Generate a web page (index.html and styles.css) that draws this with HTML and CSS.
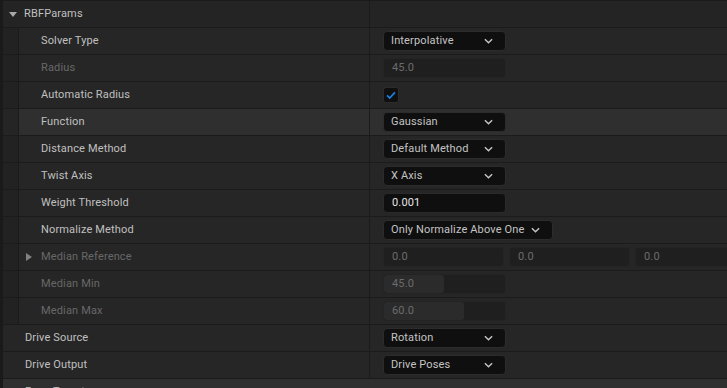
FILE: index.html
```html
<!DOCTYPE html>
<html>
<head>
<meta charset="utf-8">
<link rel="stylesheet" href="styles.css">
</head>
<body>
<div class="panel">
  <div class="row header">
    <div class="name"><span class="tri-down"></span><span class="label">RBFParams</span></div>
    <div class="value"></div>
  </div>
  <div class="row">
    <div class="name nested"><span class="indent"></span><span class="label">Solver Type</span></div>
    <div class="value"><div class="combo"><span>Interpolative</span><svg class="chev" viewBox="0 0 10 6"><polyline points="1,1 5,5 9,1"/></svg></div></div>
  </div>
  <div class="row">
    <div class="name nested"><span class="indent"></span><span class="label dim">Radius</span></div>
    <div class="value"><div class="field disabled">45.0</div></div>
  </div>
  <div class="row">
    <div class="name nested"><span class="indent"></span><span class="label">Automatic Radius</span></div>
    <div class="value"><div class="check"><svg viewBox="0 0 16 16"><polyline points="3.5,8.5 6.5,11.5 12.5,5"/></svg></div></div>
  </div>
  <div class="row hover">
    <div class="name nested"><span class="indent"></span><span class="label">Function</span></div>
    <div class="value"><div class="combo"><span>Gaussian</span><svg class="chev" viewBox="0 0 10 6"><polyline points="1,1 5,5 9,1"/></svg></div></div>
  </div>
  <div class="row">
    <div class="name nested"><span class="indent"></span><span class="label">Distance Method</span></div>
    <div class="value"><div class="combo"><span>Default Method</span><svg class="chev" viewBox="0 0 10 6"><polyline points="1,1 5,5 9,1"/></svg></div></div>
  </div>
  <div class="row">
    <div class="name nested"><span class="indent"></span><span class="label">Twist Axis</span></div>
    <div class="value"><div class="combo"><span>X Axis</span><svg class="chev" viewBox="0 0 10 6"><polyline points="1,1 5,5 9,1"/></svg></div></div>
  </div>
  <div class="row">
    <div class="name nested"><span class="indent"></span><span class="label">Weight Threshold</span></div>
    <div class="value"><div class="field active">0.001</div></div>
  </div>
  <div class="row">
    <div class="name nested"><span class="indent"></span><span class="label">Normalize Method</span></div>
    <div class="value"><div class="combo"><span>Only Normalize Above One</span><svg class="chev" viewBox="0 0 10 6"><polyline points="1,1 5,5 9,1"/></svg></div></div>
  </div>
  <div class="row">
    <div class="name nested"><span class="indent"></span><span class="tri-right"></span><span class="label dim">Median Reference</span></div>
    <div class="value"><div class="field disabled vec">0.0</div><div class="field disabled vec">0.0</div><div class="field disabled vec">0.0</div></div>
  </div>
  <div class="row">
    <div class="name nested"><span class="indent"></span><span class="label dim">Median Min</span></div>
    <div class="value"><div class="field disabled slider"><span class="fill" style="width:60px"></span><span class="num">45.0</span></div></div>
  </div>
  <div class="row">
    <div class="name nested"><span class="indent"></span><span class="label dim">Median Max</span></div>
    <div class="value"><div class="field disabled slider"><span class="fill" style="width:80px"></span><span class="num">60.0</span></div></div>
  </div>
  <div class="row">
    <div class="name"><span class="label">Drive Source</span></div>
    <div class="value"><div class="combo"><span>Rotation</span><svg class="chev" viewBox="0 0 10 6"><polyline points="1,1 5,5 9,1"/></svg></div></div>
  </div>
  <div class="row">
    <div class="name"><span class="label">Drive Output</span></div>
    <div class="value"><div class="combo"><span>Drive Poses</span><svg class="chev" viewBox="0 0 10 6"><polyline points="1,1 5,5 9,1"/></svg></div></div>
  </div>
  <div class="row category">
    <div class="name"><span class="label">Pose Targets</span></div>
  </div>
</div>
</body>
</html>
```

FILE: styles.css
```css
html, body {
  margin: 0;
  padding: 0;
  background: #1a1a1a;
  overflow: hidden;
}
body {
  font-family: Roboto, "Liberation Sans", sans-serif;
  font-size: 11px;
  letter-spacing: 0.15px;
  color: #c0c0c0;
}
.panel {
  margin-left: 3px;
  display: flex;
  flex-direction: column;
}
.row {
  display: flex;
  height: 26px;
  flex: none;
  border-top: 1px solid #1b1b1b;
  background: #262626;
}
.row.header {
  background: #242424;
}
.row.hover {
  background: #2f2f2f;
}
.row.category {
  background: #2f2f2f;
}
.name {
  width: 367px;
  box-sizing: border-box;
  border-right: 1px solid #1b1b1b;
  display: flex;
  align-items: center;
  padding-left: 22px;
  padding-bottom: 2px;
  flex: none;
}
.row.category .name {
  border-right: none;
  flex: 1;
  padding-bottom: 0;
  align-items: flex-start;
  padding-top: 6px;
}
.name.nested {
  padding-left: 0;
}
.indent {
  width: 15px;
  align-self: stretch;
  background: #222222;
  border-right: 1px solid #1b1b1b;
  margin-right: 22px;
  margin-bottom: -2px;
  flex: none;
}
.row.hover .indent {
  background: #252525;
}
.label {
  white-space: nowrap;
}
.label.dim {
  color: #686868;
}
.tri-down {
  position: relative;
  left: -16px;
  top: 1px;
  width: 0;
  height: 0;
  margin-right: -9px;
  border-left: 4.5px solid transparent;
  border-right: 4.5px solid transparent;
  border-top: 5px solid #a8a8a8;
}
.tri-right {
  width: 0;
  height: 0;
  margin-left: -15px;
  margin-right: 9px;
  margin-top: 1px;
  border-top: 4.5px solid transparent;
  border-bottom: 4.5px solid transparent;
  border-left: 6px solid #808080;
}
.value {
  flex: 1;
  display: flex;
  align-items: center;
  padding-left: 13px;
  gap: 5px;
  overflow: hidden;
  min-width: 0;
}
.combo {
  min-width: 123px;
  height: 20px;
  box-sizing: border-box;
  background: #0f0f0f;
  border: 1px solid #2c2c2c;
  border-radius: 4px;
  display: flex;
  align-items: center;
  padding: 0 12px 1px 7px;
  gap: 7px;
  white-space: nowrap;
  color: #c4c4c4;
  flex: none;
}
.combo .chev {
  margin-left: auto;
  margin-top: 1px;
  width: 9px;
  height: 6px;
  flex: none;
}
.chev polyline {
  fill: none;
  stroke: #c4c4c4;
  stroke-width: 1.6;
}
.field {
  width: 123px;
  height: 20px;
  box-sizing: border-box;
  border-radius: 4px;
  display: flex;
  align-items: center;
  padding-left: 8px;
  padding-bottom: 1px;
  flex: none;
  position: relative;
  overflow: hidden;
}
.field.disabled {
  background: #1f1f1f;
  border: 1px solid #242424;
  color: #6c6c6c;
}
.field.active {
  background: #0f0f0f;
  border: 1px solid #2a2a2a;
  color: #e6e6e6;
}
.field.vec {
  width: 121px;
}
.slider .fill {
  position: absolute;
  left: 0;
  top: 0;
  bottom: 0;
  background: #2b2b2b;
  border-radius: 3px;
}
.slider .num {
  position: relative;
}
.check {
  width: 16px;
  height: 16px;
  box-sizing: border-box;
  background: #0f0f0f;
  border: 1px solid #2c2c2c;
  border-radius: 3px;
  flex: none;
}
.check svg {
  display: block;
  width: 14px;
  height: 14px;
}
.check polyline {
  fill: none;
  stroke: #1a7fe0;
  stroke-width: 2;
}
```
